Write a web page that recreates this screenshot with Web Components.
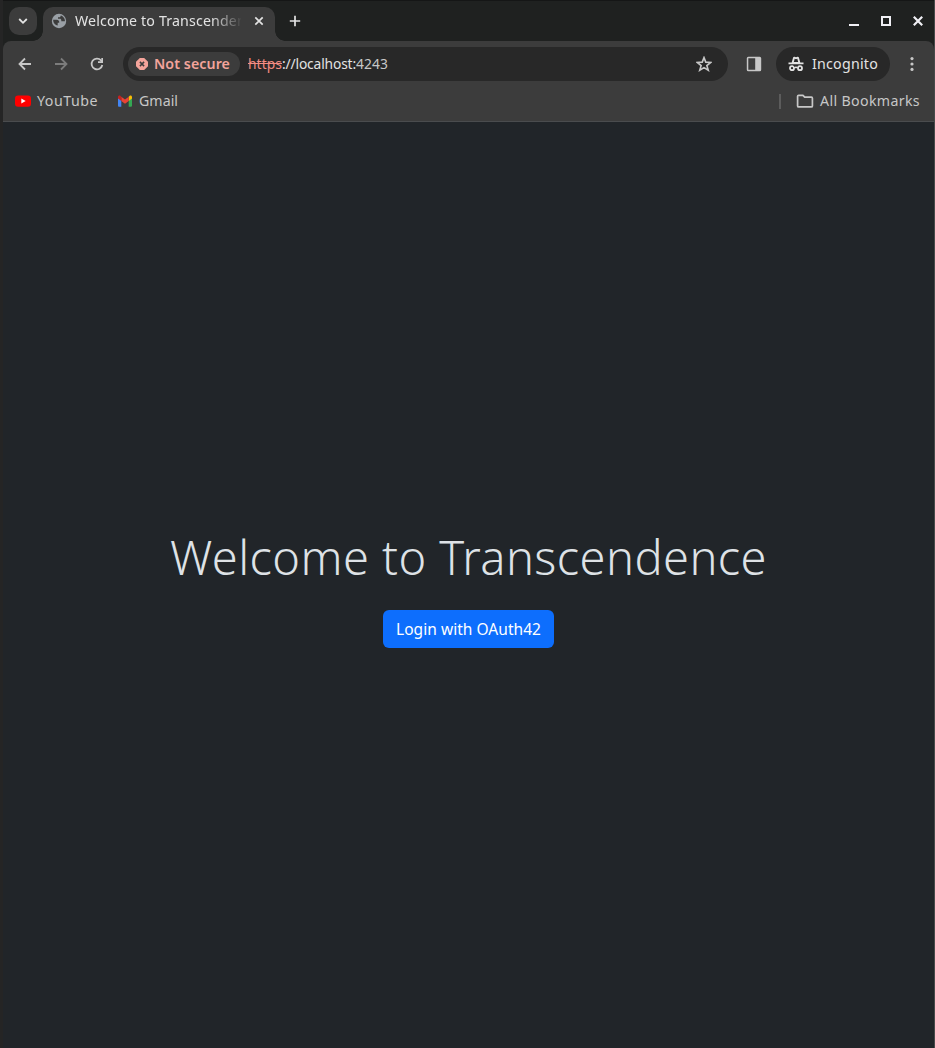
<!DOCTYPE html>
<html lang="en">
<head>
<meta charset="utf-8">
<title>Welcome to Transcendence</title>
<style>
html,body{margin:0;height:100%;background:#212529;overflow:hidden}
body{font-family:"Noto Sans","Open Sans",sans-serif}
</style>
</head>
<body>
<browser-window></browser-window>
<script>
const define = (name, markup, setup) => {
  const tpl = document.createElement('template');
  tpl.innerHTML = markup;
  customElements.define(name, class extends HTMLElement {
    constructor() {
      super();
      this.attachShadow({mode: 'open'}).append(tpl.content.cloneNode(true));
    }
    connectedCallback() { if (setup) setup(this, this.shadowRoot); }
  });
};

/* One line of text tracked to a given advance width. */
define('fit-text', `<style>
:host{display:block;white-space:pre;flex:none}
span{display:inline-block;text-decoration:var(--line,none)}
</style><span><slot></slot></span>`, (host, root) => {
  const w = parseFloat(host.getAttribute('w'));
  const span = root.querySelector('span');
  const n = host.textContent.length;
  span.style.letterSpacing = '0px';
  const natural = span.getBoundingClientRect().width;
  span.style.letterSpacing = ((w - natural) / n) + 'px';
  host.style.width = w + 'px';
});

const icons = {
  chevron: [12, '<path d="M2.2 4l3.8 3.8L9.8 4" fill="none" stroke="currentColor" stroke-width="1.8"/>'],
  globe: [16, '<circle cx="8" cy="8" r="7.200" fill="#9aa0a6"/><path d="M2.200 6.800h3.600c1.500 0 2.400.9 2.400 2.300v.7H6.700v2.600c-2.700-.2-4.700-2.700-4.500-5.600z" fill="#3c3c3c"/><path d="M9.700 2.400v.4c0 .9-.6 1.500-1.500 1.500H7v1.500h1.800c.9 0 1.500.6 1.500 1.500v.9h3.600c.3-2.500-1.600-5.200-4.200-5.800z" fill="#3c3c3c"/>'],
  x: [12, '<path d="M2.300 2.300l7.400 7.400M9.700 2.300L2.300 9.700" fill="none" stroke="currentColor" stroke-width="1.700"/>'],
  plus: [12, '<path d="M6 .8v10.400M.8 6h10.400" fill="none" stroke="currentColor" stroke-width="1.700"/>'],
  min: [12, '<path d="M1 9h10v2H1z" fill="currentColor"/>'],
  max: [12, '<path d="M2 2h8v8H2z" fill="none" stroke="currentColor" stroke-width="2"/>'],
  close: [12, '<path d="M1.800 1.800l8.400 8.400M10.200 1.800l-8.400 8.400" fill="none" stroke="currentColor" stroke-width="2.200"/>'],
  back: [16, '<path d="M14 8H3M8 2.500L2.500 8 8 13.500" fill="none" stroke="currentColor" stroke-width="1.800"/>'],
  forward: [16, '<path d="M2 8h11M8 2.500L13.500 8 8 13.500" fill="none" stroke="currentColor" stroke-width="1.800"/>'],
  reload: [16, '<path d="M13.300 9A5.400 5.400 0 1 1 12 4.300L13.200 5.500" fill="none" stroke="currentColor" stroke-width="1.800"/><path d="M14 2v5H9V5.300h3.300V2z" fill="currentColor"/>'],
  danger: [12, '<path d="M3.800 0h4.400L12 3.800v4.400L8.200 12H3.800L0 8.200V3.800z" fill="#f4a49b"/><path d="M3.900 3.900l4.200 4.200M8.100 3.900L3.900 8.100" stroke="#3c3c3c" stroke-width="1.500"/>'],
  star: [16, '<path d="M8 1.600l1.750 4.550 5.050.3-3.950 3.100 1.400 4.700L8 11.650l-4.250 2.600 1.400-4.700L1.200 6.450l5.050-.3z" fill="none" stroke="currentColor" stroke-width="1.600"/>'],
  panel: [16, '<path fill-rule="evenodd" d="M2.300.7h11.400a1.500 1.500 0 0 1 1.500 1.500v11.600a1.500 1.500 0 0 1-1.500 1.500H2.300a1.500 1.500 0 0 1-1.500-1.500V2.200A1.500 1.500 0 0 1 2.300.7zM2.300 2.300v11.400h6.900V2.300z" fill="currentColor"/>'],
  incognito: [16, '<path d="M3.600 7l1.500-5.400C5.300.9 5.900.6 6.500.8L8 1.300l1.500-.5c.6-.2 1.200.1 1.400.8L12.400 7zM.5 6.400h15v1.900H.5z" fill="currentColor"/><path d="M5.800 5.900l.9-3.100L8 3.200l1.300-.4.9 3.100z" fill="#282828"/><path d="M6.400 11.900c1-.8 2.200-.8 3.200 0" fill="none" stroke="currentColor" stroke-width="1.500"/><circle cx="4" cy="12.200" r="2" fill="none" stroke="currentColor" stroke-width="1.800"/><circle cx="12" cy="12.200" r="2" fill="none" stroke="currentColor" stroke-width="1.800"/>'],
  dots: [16, '<g fill="currentColor"><circle cx="8" cy="2.600" r="1.600"/><circle cx="8" cy="8" r="1.600"/><circle cx="8" cy="13.400" r="1.600"/></g>'],
  youtube: [16, '<rect x="0" y="2.400" width="16" height="11.300" rx="3" fill="#f00"/><path d="M6.300 5.500v5L10.700 8z" fill="#fff"/>'],
  gmail: [16, '<path d="M1 4.500v8.300c0 .5.400.9.900.9h2.400V7z" fill="#4285f4"/><path d="M11.700 7v6.700h2.400c.5 0 .9-.4.9-.9V4.500z" fill="#34a853"/><path d="M11.700 3.700V8L15 5.500V4.100c0-1.500-1.500-2-2.500-1.200z" fill="#fbbc04"/><path d="M4.300 8V3.700L8 6.500l3.700-2.800V8L8 10.800z" fill="#ea4335"/><path d="M1 4.100v1.400L4.300 8V3.700l-.8-.8C2.500 2.100 1 2.600 1 4.100z" fill="#c5221f"/>'],
  folder: [18, '<path d="M2.600 3.300h4.300l1.800 1.900h6.700c.6 0 1 .4 1 1v7.700c0 .6-.4 1-1 1H2.600c-.6 0-1-.4-1-1V4.300c0-.6.400-1 1-1z" fill="none" stroke="currentColor" stroke-width="1.700"/>']
};
define('ui-icon', `<style>:host{display:block;flex:none}svg{display:block}</style><svg aria-hidden="true"></svg>`, (host, root) => {
  const [size, body] = icons[host.getAttribute('name')];
  const svg = root.querySelector('svg');
  svg.setAttribute('viewBox', `0 0 ${size} ${size}`);
  svg.setAttribute('width', size);
  svg.setAttribute('height', size);
  svg.innerHTML = body;
});

define('tab-strip', `<style>
:host{display:flex;align-items:flex-start;height:33px;padding:7px 10px 0 6px;background:#1f2120;border-top:1px solid #151616;color:#e3e3e3;font-size:14.2px}
.search{display:grid;place-items:center;width:28px;height:28px;border-radius:10px;background:#3c3c3c;margin:-1px 6px 0 0}
.tab{position:relative;display:flex;align-items:center;width:232px;height:34px;margin-top:-1px;padding:0 10px 6px 8px;box-sizing:border-box;border-radius:10px 10px 0 0;background:#3c3c3c}
.tab::before,.tab::after{content:"";position:absolute;bottom:0;width:10px;height:10px}
.tab::before{left:-10px;background:radial-gradient(circle at 0 0,#0000 9.500px,#3c3c3c 10px)}
.tab::after{right:-10px;background:radial-gradient(circle at 100% 0,#0000 9.500px,#3c3c3c 10px)}
.title{flex:1;min-width:0;overflow:hidden;margin:0 12px 0 8px;padding-bottom:2px;-webkit-mask-image:linear-gradient(90deg,#000 136px,#0000 168px)}
.new{margin:7px 0 0 14px}
.controls{display:flex;gap:20px;margin:7px 0 0 auto;color:#f0f0f5}
</style>
<div class="search"><ui-icon name="chevron"></ui-icon></div>
<div class="tab"><ui-icon name="globe"></ui-icon><div class="title"><fit-text w="186">Welcome to Transcendence</fit-text></div><ui-icon name="x"></ui-icon></div>
<ui-icon class="new" name="plus"></ui-icon>
<div class="controls"><ui-icon name="min"></ui-icon><ui-icon name="max"></ui-icon><ui-icon name="close"></ui-icon></div>`);

define('address-bar', `<style>
:host{display:flex;align-items:center;box-sizing:border-box;width:605px;height:34px;padding:0 16px 0 5px;border-radius:17px;background:#282828}
fit-text{padding-bottom:2px}
.chip{display:flex;align-items:center;gap:6px;width:112px;height:24px;padding-left:8px;box-sizing:border-box;border-radius:12px;background:#3c3c3c;color:#f4a49b;font-weight:560;margin-right:8px}
.url{display:flex;font-size:13.800px;color:#e3e3e3}
.url .scheme{color:#f28b82;--line:line-through}
.url .port{color:#c7c7c7}
.star{margin-left:auto;color:#c7c7c7}
</style>
<div class="chip"><ui-icon name="danger"></ui-icon><fit-text w="76">Not secure</fit-text></div>
<div class="url"><fit-text class="scheme" w="34">https</fit-text><fit-text w="74">://localhost:</fit-text><fit-text class="port" w="32">4243</fit-text></div>
<ui-icon class="star" name="star"></ui-icon>`);

define('nav-bar', `<style>
:host{display:flex;align-items:center;height:46px;padding:0 14px;color:#c7c7c7;font-size:14.200px}
fit-text{padding-bottom:2px}
.nav{display:flex;gap:20px;width:106px}
.off{color:#7c7c7c}
.panel{margin:0 14px 0 18px}
.incognito{display:flex;align-items:center;gap:8px;width:114px;height:34px;padding-left:12px;box-sizing:border-box;border-radius:17px;background:#282828;color:#e3e3e3;margin-right:14px}
</style>
<div class="nav"><ui-icon name="back"></ui-icon><ui-icon class="off" name="forward"></ui-icon><ui-icon name="reload"></ui-icon></div>
<address-bar></address-bar>
<ui-icon class="panel" name="panel"></ui-icon>
<div class="incognito"><ui-icon name="incognito"></ui-icon><fit-text w="66">Incognito</fit-text></div>
<ui-icon name="dots"></ui-icon>`);

define('bookmark-item', `<style>:host{display:flex;align-items:center;gap:6px}::slotted(fit-text){padding-bottom:2px}</style><slot name="icon"></slot><slot></slot>`);

define('bookmarks-bar', `<style>
:host{display:flex;align-items:center;height:34px;padding:0 14px 0 12px;margin-top:-3px;padding-bottom:3px;color:#c7c7c7;font-size:14.200px;border-bottom:1px solid #4a4c4e}
.gmail{margin-left:19px}
.rule{width:2px;height:15px;margin:0 15px 0 auto;background:#5c5c5c}
</style>
<bookmark-item><ui-icon slot="icon" name="youtube"></ui-icon><fit-text w="61">YouTube</fit-text></bookmark-item>
<bookmark-item class="gmail"><ui-icon slot="icon" name="gmail"></ui-icon><fit-text w="39">Gmail</fit-text></bookmark-item>
<span class="rule"></span>
<bookmark-item><ui-icon slot="icon" name="folder"></ui-icon><fit-text w="100">All Bookmarks</fit-text></bookmark-item>`);

define('login-button', `<style>
:host{display:block}
button{display:block;height:38px;padding:0 13px;border:0;border-radius:6px;background:#0d6efd;color:#fff;font:15.500px "Noto Sans",sans-serif}
</style><button type="button"><slot></slot></button>`);

define('welcome-page', `<style>
:host{flex:1;display:flex;flex-direction:column;align-items:center;background:#212529;color:#dee2e6;padding-top:406px;box-sizing:border-box}
h1{margin:0 0 24px;font-size:47px;line-height:58px;font-weight:300}
</style>
<h1><fit-text w="597">Welcome to Transcendence</fit-text></h1>
<login-button><fit-text w="145">Login with OAuth42</fit-text></login-button>`);

define('browser-window', `<style>
:host{display:flex;flex-direction:column;box-sizing:border-box;height:1048px;width:935px;border-left:3px solid #252525;border-right:1px solid #484a4a;background:#1f2120}
.chrome{background:#3c3c3c;border-radius:8px 8px 0 0}
</style>
<tab-strip></tab-strip>
<div class="chrome"><nav-bar></nav-bar><bookmarks-bar></bookmarks-bar></div>
<welcome-page></welcome-page>`);
</script>
</body>
</html>
